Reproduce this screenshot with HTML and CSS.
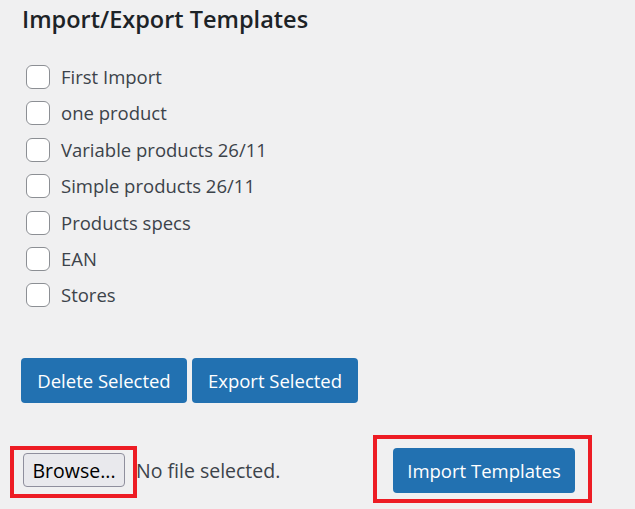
FILE: index.html
```html
<!DOCTYPE html>
<html>
<head>
    <title>Import/Export Templates</title>
    <link rel="stylesheet" href="styles.css">
</head>
<body>

    <div class="wrap">
        <h2 class="title">Import/Export Templates</h2>

        <ul class="template-list">
            <li><label><input type="checkbox"> First Import</label></li>
            <li><label><input type="checkbox"> one product</label></li>
            <li><label><input type="checkbox"> Variable products 26/11</label></li>
            <li><label><input type="checkbox"> Simple products 26/11</label></li>
            <li><label><input type="checkbox"> Products specs</label></li>
            <li><label><input type="checkbox"> EAN</label></li>
            <li><label><input type="checkbox"> Stores</label></li>
        </ul>

        <div class="actions">
            <button class="button-primary">Delete Selected</button>
            <button class="button-primary">Export Selected</button>
        </div>

        <div class="import-row">
            <span class="file-input">
                <span class="marked marked-browse"><button class="browse">Browse...</button></span>
                <span class="file-name">No file selected.</span>
            </span>
            <span class="marked marked-import"><button class="button-primary">Import Templates</button></span>
        </div>
    </div>

</body>
</html>
```

FILE: styles.css
```css
body {
    font-family: "Open Sans", "Noto Sans", sans-serif;
    margin: 0;
    background-color: #f0f0f1;
    color: #3c434a;
}

.wrap {
    padding: 0 0 16px 22px;
}

.title {
    font-size: 23.5px;
    font-weight: 600;
    color: #1d2327;
    margin: 0;
    padding-top: 2px;
    line-height: 34px;
}

.template-list {
    list-style: none;
    margin: 0;
    padding: 29px 0 0 4px;
}

.template-list li {
    height: 36.4px;
}

.template-list label {
    display: flex;
    align-items: center;
    gap: 11px;
    font-size: 18.5px;
    line-height: 24px;
}

.template-list input {
    appearance: none;
    width: 24px;
    height: 24px;
    margin: 0;
    background: white;
    border: 1.5px solid #8c8f94;
    border-radius: 6px;
}

.actions {
    display: flex;
    gap: 5px;
    margin-top: 38px;
    margin-left: -1px;
}

.button-primary {
    font-family: "Open Sans", "Noto Sans", sans-serif;
    font-size: 18.5px;
    background: #2271b1;
    color: white;
    border: none;
    border-radius: 4px;
    height: 45px;
    padding: 0;
    white-space: nowrap;
}

.actions .button-primary {
    width: 166px;
}

.import-row {
    display: flex;
    align-items: center;
    margin-top: 45px;
}

.file-input {
    display: flex;
    align-items: center;
    gap: 11px;
    width: 370px;
    margin-left: 1px;
}

.browse {
    font-family: "Open Sans", "Noto Sans", sans-serif;
    font-size: 19.5px;
    color: black;
    background: #e9e9ed;
    border: 1px solid #8f8f9d;
    border-radius: 4px;
    height: 34px;
    width: 102px;
    padding: 0;
}

.file-name {
    font-size: 19.5px;
}

.marked {
    position: relative;
    display: inline-flex;
}

.marked::after {
    content: "";
    position: absolute;
    border: 4px solid #ed1c24;
}

.marked-browse::after {
    left: -13px;
    right: -12px;
    top: -7px;
    bottom: -11px;
}

.marked-import .button-primary {
    width: 182px;
}

.marked-import::after {
    left: -20px;
    right: -17px;
    top: -13px;
    bottom: -10px;
}
```
